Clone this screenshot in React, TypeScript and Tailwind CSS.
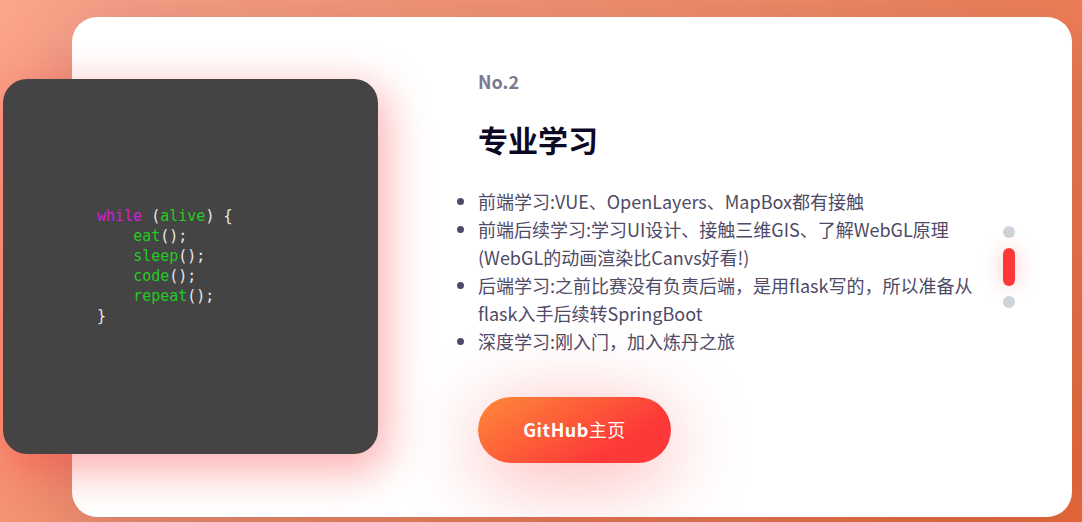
import React from "react";

export default function App() {
  const items = [
    "前端学习:VUE、OpenLayers、MapBox都有接触",
    "前端后续学习:学习UI设计、接触三维GIS、了解WebGL原理(WebGL的动画渲染比Canvs好看!)",
    "后端学习:之前比赛没有负责后端，是用flask写的，所以准备从flask入手后续转SpringBoot",
    "深度学习:刚入门，加入炼丹之旅",
  ];
  return (
    <div
      className="w-[1082px] h-[522px] overflow-hidden bg-[linear-gradient(135deg,#fba58d_0%,#f28a66_50%,#ec6937_100%)] pl-[72px] pt-[17px]"
      style={{ fontFamily: '"Noto Sans CJK SC", "Noto Sans", sans-serif' }}
    >
      <div className="w-[1000px] h-[500px] bg-white rounded-[25px] shadow-[0_14px_80px_rgba(34,35,58,0.2)] flex items-center">
        {/* code image */}
        <div className="-ml-[69px] mb-[2px] w-[375px] h-[375px] shrink-0 rounded-[24px] bg-[#444444] shadow-[4px_13px_40px_6px_rgba(252,56,56,0.38)] flex items-center pl-[94px]">
          <pre
            className="text-[15px] leading-[20px] text-[#e8e8e8]"
            style={{ fontFamily: '"DejaVu Sans Mono", monospace' }}
          >
            <span className="text-[#d21fd2]">while</span>
            {" ("}
            <span className="text-[#22cc22]">alive</span>
            {") {\n    "}
            <span className="text-[#22cc22]">eat</span>
            {"();\n    "}
            <span className="text-[#22cc22]">sleep</span>
            {"();\n    "}
            <span className="text-[#22cc22]">code</span>
            {"();\n    "}
            <span className="text-[#22cc22]">repeat</span>
            {"();\n}"}
          </pre>
        </div>

        {/* content */}
        <div className="ml-[100px] mb-[4px] w-[518px] flex flex-col">
          <div className="text-[18px] leading-[26px] font-semibold text-[#7b7992]">No.2</div>
          <h2 className="mt-[25px] text-[30px] leading-[40px] font-bold text-[#0d0925]">专业学习</h2>
          <ul className="mt-[28px] list-disc text-[18px] leading-[28px] text-[#4e4a67] marker:text-[#4e4a67]">
            {items.map((t) => (
              <li key={t}>{t}</li>
            ))}
          </ul>
          <div className="mt-[42px]">
            <button className="w-[193px] h-[66px] rounded-full bg-[linear-gradient(147deg,#fe8a39_0%,#fd3838_74%)] shadow-[0_14px_80px_rgba(252,56,56,0.4)] text-white text-[18px] tracking-[0.5px]">
              <span className="font-bold">GitHub</span>
              <span className="font-normal">主页</span>
            </button>
          </div>
        </div>

        {/* pagination */}
        <div className="ml-auto mr-[57px] flex flex-col items-center gap-[10px]">
          <span className="w-3 h-3 rounded-full bg-[#cdd4da]" />
          <span className="w-3 h-[38px] rounded-full bg-[#fd3838] shadow-[0_0_20px_rgba(252,56,56,0.3)]" />
          <span className="w-3 h-3 rounded-full bg-[#cdd4da]" />
        </div>
      </div>
    </div>
  );
}
